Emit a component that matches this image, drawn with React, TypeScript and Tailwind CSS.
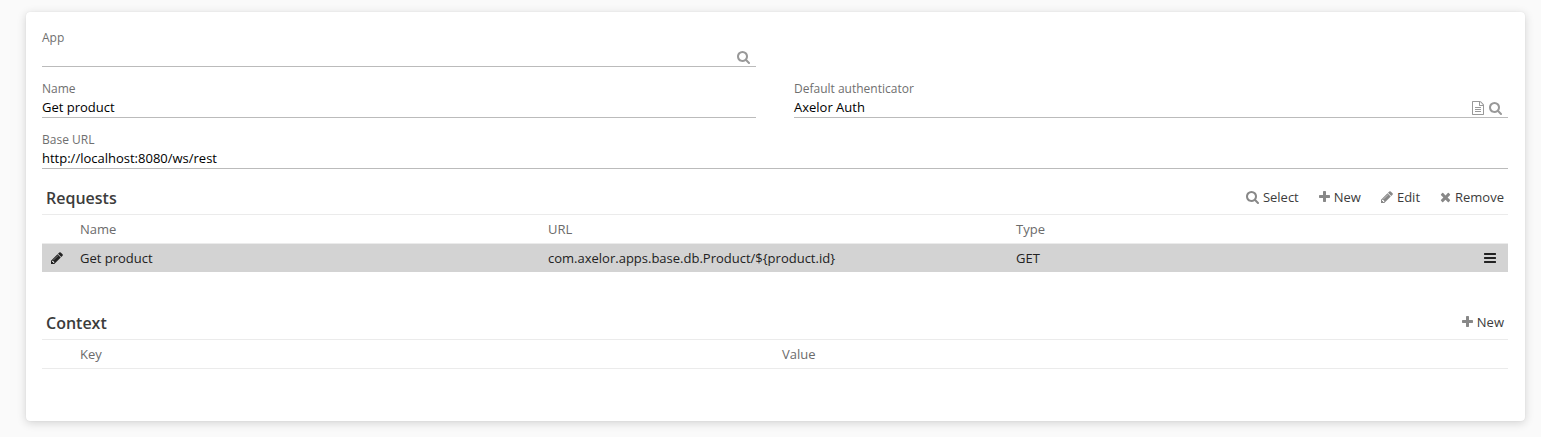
import type { ReactNode } from 'react';

const icons = {
  search: {
    box: '64 0 1664 1792',
    size: 'w-[13px]',
    d: 'M1216 832q0-185-131.500-316.500t-316.500-131.500-316.500 131.500-131.500 316.500 131.500 316.500 316.500 131.500 316.500-131.500 131.500-316.500zm512 832q0 52-38 90t-90 38q-54 0-90-38l-343-342q-179 124-399 124-143 0-273.500-55.500t-225-150-150-225-55.500-273.500 55.500-273.500 150-225 225-150 273.500-55.500 273.500 55.500 225 150 150 225 55.500 273.500q0 220-124 399l343 343q37 37 37 90z',
  },
  plus: {
    box: '192 0 1408 1792',
    size: 'w-[11px]',
    d: 'M1600 736v192q0 40-28 68t-68 28h-416v416q0 40-28 68t-68 28h-192q-40 0-68-28t-28-68v-416h-416q-40 0-68-28t-28-68v-192q0-40 28-68t68-28h416v-416q0-40 28-68t68-28h192q40 0 68 28t28 68v416h416q40 0 68 28t28 68z',
  },
  pencil: {
    box: '128 0 1536 1792',
    size: 'w-3',
    d: 'M491 1536l91-91-235-235-91 91v107h128v128h107zm523-928q0-22-22-22-10 0-17 7l-542 542q-7 7-7 17 0 22 22 22 10 0 17-7l542-542q7-7 7-17zm-54-192l416 416-832 832h-416v-416zm683 96q0 53-37 90l-166 166-416-416 166-165q36-38 90-38 53 0 91 38l235 234q37 39 37 91z',
  },
  times: {
    box: '192 0 1408 1792',
    size: 'w-[11px]',
    d: 'M1490 1322q0 40-28 68l-136 136q-28 28-68 28t-68-28l-294-294-294 294q-28 28-68 28t-68-28l-136-136q-28-28-28-68t28-68l294-294-294-294q-28-28-28-68t28-68l136-136q28-28 68-28t68 28l294 294 294-294q28-28 68-28t68 28l136 136q28 28 28 68t-28 68l-294 294 294 294q28 28 28 68z',
  },
  bars: {
    box: '128 0 1536 1792',
    size: 'w-3',
    d: 'M1664 1344v128q0 26-19 45t-45 19h-1408q-26 0-45-19t-19-45v-128q0-26 19-45t45-19h1408q26 0 45 19t19 45zm0-512v128q0 26-19 45t-45 19h-1408q-26 0-45-19t-19-45v-128q0-26 19-45t45-19h1408q26 0 45 19t19 45zm0-512v128q0 26-19 45t-45 19h-1408q-26 0-45-19t-19-45v-128q0-26 19-45t45-19h1408q26 0 45 19t19 45z',
  },
  file: {
    box: '128 0 1536 1792',
    size: 'w-3',
    d: 'M1596 380q28 28 48 76t20 88v1152q0 40-28 68t-68 28h-1344q-40 0-68-28t-28-68v-1600q0-40 28-68t68-28h896q40 0 88 20t76 48zm-444-244v376h376q-10-29-22-41l-313-313q-12-12-41-22zm384 1528v-1024h-416q-40 0-68-28t-28-68v-416h-768v1536h1280zm-1024-864q0-14 9-23t23-9h704q14 0 23 9t9 23v64q0 14-9 23t-23 9h-704q-14 0-23-9t-9-23v-64zm736 224q14 0 23 9t9 23v64q0 14-9 23t-23 9h-704q-14 0-23-9t-9-23v-64q0-14 9-23t23-9h704zm0 256q14 0 23 9t9 23v64q0 14-9 23t-23 9h-704q-14 0-23-9t-9-23v-64q0-14 9-23t23-9h704z',
  },
};

type IconName = keyof typeof icons;

function Icon({ name, className = '' }: { name: IconName; className?: string }) {
  const { box, size, d } = icons[name];
  return (
    <svg viewBox={box} fill="currentColor" className={`h-3.5 shrink-0 overflow-visible ${size} ${className}`}>
      <path d={d} />
    </svg>
  );
}

function Field({ label, value, children }: { label: string; value?: string; children?: ReactNode }) {
  return (
    <div className="flex h-[51px] flex-col border-b border-[#bbb] pt-[13px]">
      <label className="h-[17px] text-xs leading-[18px] text-[#6f6f6f]">{label}</label>
      <div className="flex h-5 items-center justify-between text-[13px] leading-5 text-black">
        <span>{value}</span>
        <span className="flex gap-[5px] pt-0.5 pr-1.5 text-[#999]">{children}</span>
      </div>
    </div>
  );
}

function Action({ icon, label }: { icon: IconName; label: string }) {
  return (
    <button className="flex items-center gap-1 text-[13px] leading-5 text-[#3c3c3c]">
      <Icon name={icon} className="text-[#888]" />
      {label}
    </button>
  );
}

function PanelHeader({ title, children }: { title: string; children: ReactNode }) {
  return (
    <div className="flex items-center justify-between border-b border-[#ebebeb] px-1">
      <h2 className="text-base leading-6 font-semibold text-[#3c3c3c]">{title}</h2>
      <div className="flex gap-5 pb-0.5">{children}</div>
    </div>
  );
}

export default function App() {
  return (
    <div className="h-[437px] bg-[#fafafa] pt-3 pr-4 pl-[26px] font-['Open_Sans','Noto_Sans',sans-serif]">
      <main className="h-[409px] w-[1499px] rounded-[4px] bg-white px-4 pt-1 pr-[17px] shadow-[0_0_1px_rgba(0,0,0,0.12),0_2px_10px_rgba(0,0,0,0.16)]">
        <div className="grid grid-cols-2 gap-x-[38px]">
          <Field label="App">
            <Icon name="search" />
          </Field>
          <div />
          <Field label="Name" value="Get product" />
          <Field label="Default authenticator" value="Axelor Auth">
            <Icon name="file" />
            <Icon name="search" />
          </Field>
          <div className="col-span-2">
            <Field label="Base URL" value="http://localhost:8080/ws/rest" />
          </div>
        </div>

        <section className="grid grid-rows-[46px_29px_28px] text-[13px] leading-5">
          <div className="grid pt-3">
            <PanelHeader title="Requests">
              <Action icon="search" label="Select" />
              <Action icon="plus" label="New" />
              <Action icon="pencil" label="Edit" />
              <Action icon="times" label="Remove" />
            </PanelHeader>
          </div>
          <div className="grid grid-cols-[38px_468px_468px_1fr] items-center border-b border-[#ebebeb] text-[#6b6b6b]">
            <span />
            <span>Name</span>
            <span>URL</span>
            <span>Type</span>
          </div>
          <div className="grid grid-cols-[38px_468px_468px_1fr_24px] items-center bg-[#d3d3d3] text-[#222]">
            <Icon name="pencil" className="ml-[9px]" />
            <span>Get product</span>
            <span>{'com.axelor.apps.base.db.Product/${product.id}'}</span>
            <span>GET</span>
            <Icon name="bars" />
          </div>
        </section>

        <section className="mt-[22px] grid grid-rows-[46px_29px] text-[13px] leading-5">
          <div className="grid pt-3">
            <PanelHeader title="Context">
              <Action icon="plus" label="New" />
            </PanelHeader>
          </div>
          <div className="grid grid-cols-[38px_702px_1fr] items-center border-b border-[#ebebeb] text-[#6b6b6b]">
            <span />
            <span>Key</span>
            <span>Value</span>
          </div>
        </section>
      </main>
    </div>
  );
}
